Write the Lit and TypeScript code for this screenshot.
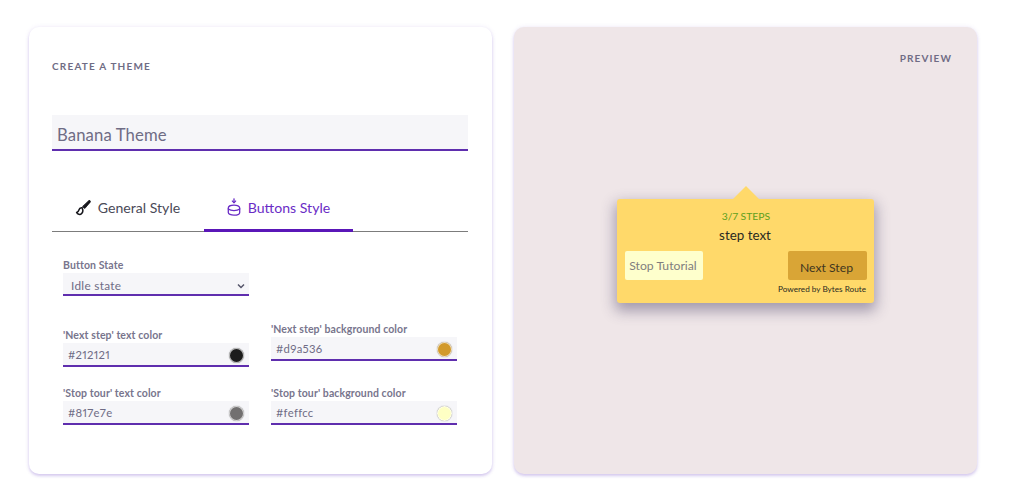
import { LitElement, html, css } from "lit";
import { customElement } from "lit/decorators.js";

const field = (label: string, value: string, color: string, cls = "") => html`
  <div class="field ${cls}">
    <div class="lab">${label}</div>
    <div class="inp"><span>${value}</span><i class="dot" style="background:${color}"></i></div>
  </div>`;

@customElement("app-root")
export class AppRoot extends LitElement {
  static styles = css`
    :host { display: block; width: 1024px; height: 499px; background: #fff; overflow: hidden; font-family: "Lato", "Open Sans", sans-serif; font-variant-numeric: proportional-nums; }
    .page { display: flex; gap: 22px; padding: 27px 0 0 29px; }
    .card { width: 463px; height: 447px; box-sizing: border-box; border-radius: 10px; box-shadow: 0 2px 3px rgba(110,70,200,.25), 0 0 5px rgba(110,70,200,.1); }
    .left { background: #fff; padding: 33px 24px 0 23px; }
    .title { font-size: 10px; line-height: 12px; font-weight: 700; letter-spacing: 1.2px; color: #6f6c85; }
    .name { margin-top: 43px; height: 36px; box-sizing: border-box; background: #f6f6f9; border-bottom: 2px solid #5f2eae; padding: 8px 5px 0; font-size: 16.7px; line-height: 24px; color: #6f6c85; letter-spacing: .12px; }
    .tabs { margin-top: 27px; height: 54px; box-sizing: border-box; display: flex; border-bottom: 1px solid #7c7c7c; }
    .tab { display: flex; align-items: center; justify-content: center; gap: 6px; height: 54px; box-sizing: border-box; font-size: 14.1px; color: #4a4a58; }
    .tab.g { width: 152px; padding: 5px 2px 0 0; }
    .tab.b { width: 149px; color: #6a2cc6; border-bottom: 3px solid #5a16b8; padding-top: 7px; gap: 7px; }
    .tab svg { display: block; }
    .body { padding: 27px 11px 0 11px; }
    .lab { font-size: 10.5px; line-height: 12px; padding-bottom: 2px; font-weight: 700; color: #78758d; letter-spacing: .1px; }
    .state { width: 186px; }
    .sel { height: 23px; box-sizing: border-box; background: #f6f6f9; border-bottom: 2px solid #5f2eae; display: flex; align-items: center; justify-content: space-between; padding: 4px 3px 0 8px; font-size: 11.8px; color: #6f6c85; letter-spacing: .3px; }
    .grid { display: grid; grid-template-columns: 186px 186px; column-gap: 22px; row-gap: 20px; margin-top: 27px; }
    .field.low { padding-top: 6px; }
    .inp { height: 24px; box-sizing: border-box; background: #f6f6f9; border-bottom: 2px solid #5f2eae; display: flex; align-items: center; justify-content: space-between; padding: 1px 5px 0 5px; font-size: 11.3px; color: #6f6c85; letter-spacing: .3px; }
    .dot { display: block; width: 15px; height: 15px; margin-top: 1px; box-sizing: border-box; border-radius: 50%; border: 1px solid rgba(255,255,255,.7); box-shadow: 0 0 1px rgba(0,0,0,.55); }
    .right { background: #efe6e8; position: relative; display: flex; flex-direction: column; align-items: flex-end; padding: 25px 25px 0 0; }
    .preview { font-size: 10px; line-height: 12px; font-weight: 700; letter-spacing: 1.1px; color: #6f6c85; }
    .stage { align-self: center; margin-top: 135px; margin-left: 25px; position: relative; width: 257px; height: 104px; box-sizing: border-box; background: #ffd96a; border-radius: 3px; box-shadow: 0 6px 14px 2px rgba(60,50,90,.42); padding: 10px 7px 0 8px; display: flex; flex-direction: column; }
    .stage::before { content: ""; position: absolute; left: 116px; top: -13px; border-left: 13px solid transparent; border-right: 13px solid transparent; border-bottom: 13px solid #ffd96a; }
    .steps { text-align: center; font-size: 10.4px; line-height: 14px; color: #5fa020; }
    .txt { text-align: center; font-size: 13.4px; line-height: 16px; margin-top: 4px; color: #2a2a22; padding-right: 2px; }
    .btns { display: flex; justify-content: space-between; margin-top: 8px; }
    .stop { width: 78px; height: 29px; border-radius: 2px; background: #feffcc; color: #817e7e; font-size: 12.2px; display: flex; align-items: center; justify-content: center; padding: 0 2px 1px 0; box-sizing: border-box; }
    .next { width: 79px; height: 29px; border-radius: 2px; background: #d9a536; color: #3f3520; font-size: 12.2px; display: flex; align-items: center; justify-content: center; padding: 3px 2px 0 0; box-sizing: border-box; }
    .pow { text-align: right; margin-top: 4px; font-size: 8.2px; line-height: 11px; color: #2a2a22; padding-right: 1px; }
  `;

  render() {
    return html`
      <div class="page">
        <section class="card left">
          <div class="title">CREATE A THEME</div>
          <div class="name">Banana Theme</div>
          <div class="tabs">
            <div class="tab g">
              <svg width="18" height="18" viewBox="0 0 18 18" fill="none" stroke="#16161c" stroke-width="1.7" stroke-linecap="round"><path d="M15.600 2.200 10 8"/><path d="M15.400 1.500c.8.3 1.200 1 .8 1.700L10.800 9.500 8.800 7.700Z" fill="#16161c" stroke-width=".8"/><path d="M8.200 8.800c-1.700-.3-2.900.7-3.300 2.200-.3 1.200-1 2-2.200 2.500.6 2 3.500 2.600 5 1 1.300-1.400 1.500-3.500.5-5.700Z" stroke-width="1.500"/></svg>
              General Style
            </div>
            <div class="tab b">
              <svg width="14" height="18" viewBox="0 0 14 18" fill="none" stroke="#6a2cc6" stroke-width="1.300" stroke-linecap="round"><path d="M7 .8v3.700"/><path d="M5.300 3 7 4.800 8.700 3" stroke-width="1.100"/><path d="M1.300 10c0-1.800 2.500-2.800 5.700-2.800s5.700 1 5.700 2.800v4.400c0 1.700-2.500 2.800-5.700 2.800s-5.700-1.100-5.700-2.800Z"/><path d="M1.300 11c1.400 1.100 3.500 1.600 5.700 1.600s4.300-.5 5.700-1.600"/></svg>
              Buttons Style
            </div>
          </div>
          <div class="body">
            <div class="state">
              <div class="lab">Button State</div>
              <div class="sel">
                <span>Idle state</span>
                <svg width="10" height="10" viewBox="0 0 10 10" fill="none" stroke="#55556a" stroke-width="1.500"><path d="M2 3.500 5 6.500 8 3.500"/></svg>
              </div>
            </div>
            <div class="grid">
              ${field("'Next step' text color", "#212121", "#1c1c1c", "low")}
              ${field("'Next step' background color", "#d9a536", "#d29a2c")}
              ${field("'Stop tour' text color", "#817e7e", "#727070")}
              ${field("'Stop tour' background color", "#feffcc", "#feffc4")}
            </div>
          </div>
        </section>
        <section class="card right">
          <div class="preview">PREVIEW</div>
          <div class="stage">
            <div class="steps">3/7 STEPS</div>
            <div class="txt">step text</div>
            <div class="btns">
              <div class="stop">Stop Tutorial</div>
              <div class="next">Next Step</div>
            </div>
            <div class="pow">Powered by Bytes Route</div>
          </div>
        </section>
      </div>
    `;
  }
}
